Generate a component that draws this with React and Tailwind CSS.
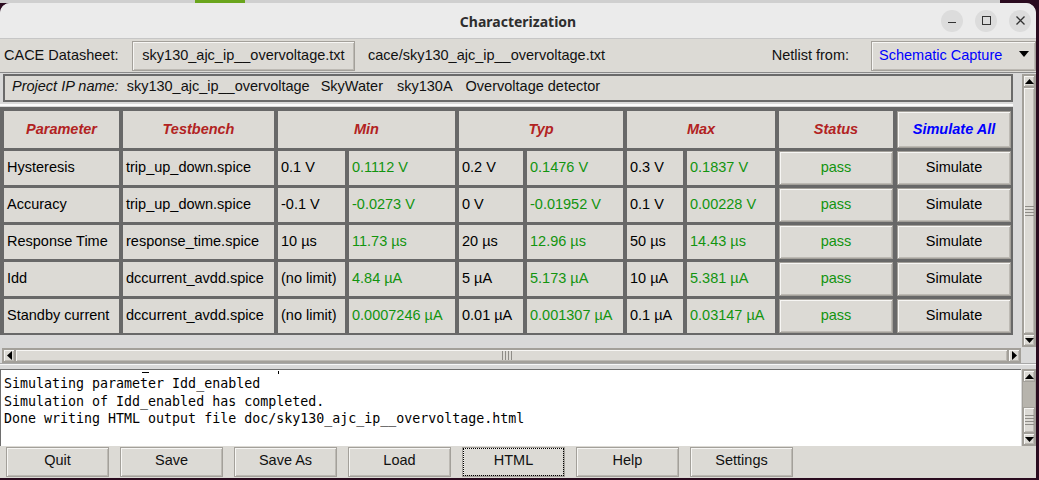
import React from "react";

const rows = [
    ["Hysteresis", "trip_up_down.spice", "0.1 V", "0.1112 V", "0.2 V", "0.1476 V", "0.3 V", "0.1837 V"],
    ["Accuracy", "trip_up_down.spice", "-0.1 V", "-0.0273 V", "0 V", "-0.01952 V", "0.1 V", "0.00228 V"],
    ["Response Time", "response_time.spice", "10 µs", "11.73 µs", "20 µs", "12.96 µs", "50 µs", "14.43 µs"],
    ["Idd", "dccurrent_avdd.spice", "(no limit)", "4.84 µA", "5 µA", "5.173 µA", "10 µA", "5.381 µA"],
    ["Standby current", "dccurrent_avdd.spice", "(no limit)", "0.0007246 µA", "0.01 µA", "0.001307 µA", "0.1 µA", "0.03147 µA"],
];

const raised = "bg-[#dcdad5] border border-[#a3a09a] shadow-[inset_1px_1px_0_#f7f6f4,inset_-1px_-1px_0_#bcb9b3]";

function Tri({ dir = "down", w = 9, h = 5 }) {
    const pts = {
        down: `0,0 ${w},0 ${w / 2},${h}`,
        up: `0,${h} ${w},${h} ${w / 2},0`,
        left: `${w},0 ${w},${h} 0,${h / 2}`,
        right: `0,0 0,${h} ${w},${h / 2}`,
    }[dir];
    return (
        <svg width={w} height={h} viewBox={`0 0 ${w} ${h}`}>
            <polygon points={pts} fill="#000" />
        </svg>
    );
}

function Grip({ vertical = true }) {
    // little ridged lines in the middle of a Tk slider
    return vertical ? (
        <div className="flex flex-col gap-[2px]">
            <div className="w-[9px] h-px bg-[#8e8c87]" />
            <div className="w-[9px] h-px bg-[#8e8c87]" />
            <div className="w-[9px] h-px bg-[#8e8c87]" />
            <div className="w-[9px] h-px bg-[#8e8c87]" />
        </div>
    ) : (
        <div className="flex gap-[2px]">
            <div className="h-[9px] w-px bg-[#8e8c87]" />
            <div className="h-[9px] w-px bg-[#8e8c87]" />
            <div className="h-[9px] w-px bg-[#8e8c87]" />
            <div className="h-[9px] w-px bg-[#8e8c87]" />
        </div>
    );
}

function Cell({ children, green }) {
    return (
        <div className={"bg-[#dcdad5] flex items-center pl-[3px] whitespace-nowrap " + (green ? "text-[#12940f]" : "text-black")}>
            {children}
        </div>
    );
}

export default function App() {
    return (
        <div className="w-[1039px] h-[480px] bg-[#2a0b1f] overflow-hidden font-['Liberation_Sans',Arial,sans-serif] text-[14.5px] text-[#111]">
            {/* window behind, peeking over the top */}
            <div className="h-[3px] flex">
                <div className="w-[195px] bg-[#cfcfcf]" />
                <div className="w-[50px] bg-[#6aa51c]" />
                <div className="w-[755px] bg-[#cfcfcf]" />
                <div className="flex-1 bg-[#2a0b1f]" />
            </div>

            <div className="w-[1036px] h-[475px] flex flex-col bg-[#d9d9d9] rounded-t-[10px] overflow-hidden">
                {/* title bar */}
                <div className="h-[36px] shrink-0 bg-[#ebebeb] border-b border-[#c6c6c6] grid grid-cols-[1fr_auto_1fr] items-center">
                    <div />
                    <div className="font-['Noto_Sans',sans-serif] font-bold text-[14px] text-[#2e2e2e] pt-[1px]">Characterization</div>
                    <div className="flex justify-end gap-[12px] pr-[5px]">
                        <div className="w-[22px] h-[22px] rounded-full bg-[#dcdcdc] flex items-center justify-center">
                            <div className="w-[8px] h-[1.5px] bg-[#333] mt-[4px]" />
                        </div>
                        <div className="w-[22px] h-[22px] rounded-full bg-[#dcdcdc] flex items-center justify-center">
                            <div className="w-[9px] h-[9px] border border-[#333]" />
                        </div>
                        <div className="w-[22px] h-[22px] rounded-full bg-[#dcdcdc] flex items-center justify-center">
                            <svg width="9" height="9" viewBox="0 0 9 9">
                                <path d="M0.5 0.5L8.5 8.5M8.5 0.5L0.5 8.5" stroke="#333" strokeWidth="1.3" />
                            </svg>
                        </div>
                    </div>
                </div>

                {/* datasheet bar */}
                <div className="h-[33px] shrink-0 flex items-center pl-[4px] bg-[#dcdad5]">
                    <span className="w-[128px]">CACE Datasheet:</span>
                    <div className={"w-[223px] h-[30px] flex items-center justify-center " + raised}>sky130_ajc_ip__overvoltage.txt</div>
                    <span className="ml-[13px]">cace/sky130_ajc_ip__overvoltage.txt</span>
                    <span className="ml-auto mr-[22px]">Netlist from:</span>
                    <div className={"w-[165px] h-[30px] flex items-center pl-[7px] pr-[6px] text-[#0000ff] " + raised}>
                        <span>Schematic Capture</span>
                        <span className="ml-auto mb-[3px]"><Tri dir="down" w={10} h={6} /></span>
                    </div>
                </div>
                <div className="h-px shrink-0 bg-[#8a8a8a]" />

                {/* table area */}
                <div className="h-[275px] shrink-0 flex">
                    <div className="w-[1021px] flex flex-col">
                        <div className="ml-[3px] mt-px w-[1010px] h-[28px] border-2 border-[#6a6a6a] bg-[#dcdad5] flex items-start pl-[7px] whitespace-nowrap">
                            <span className="italic">Project IP name:</span>
                            <span className="ml-[8px]">sky130_ajc_ip__overvoltage</span>
                            <span className="ml-[11px]">SkyWater</span>
                            <span className="ml-[14px]">sky130A</span>
                            <span className="ml-[13px]">Overvoltage detector</span>
                        </div>
                        <div className="h-[5px] flex flex-col justify-center">
                            <div className="h-[2px] bg-[#fbfbfb] w-[1013px]" />
                        </div>

                        <div className="w-[1013px] bg-[#686868] pt-[4px] pl-[4px] pr-[2px] pb-[2px] grid grid-cols-[115px_151px_67px_106px_64px_96px_56px_88px_114px_114px] grid-rows-[37px_34px_34px_34px_34px_34px] gap-x-[4px] gap-y-[3px]">
                            <div className="bg-[#dcdad5] flex items-center justify-center font-bold italic text-[#b22222]">Parameter</div>
                            <div className="bg-[#dcdad5] flex items-center justify-center font-bold italic text-[#b22222]">Testbench</div>
                            <div className="col-span-2 bg-[#dcdad5] flex items-center justify-center font-bold italic text-[#b22222]">Min</div>
                            <div className="col-span-2 bg-[#dcdad5] flex items-center justify-center font-bold italic text-[#b22222]">Typ</div>
                            <div className="col-span-2 bg-[#dcdad5] flex items-center justify-center font-bold italic text-[#b22222]">Max</div>
                            <div className="bg-[#dcdad5] flex items-center justify-center font-bold italic text-[#b22222]">Status</div>
                            <div className={"flex items-center justify-center font-bold italic text-[#0000ff] " + raised}>Simulate All</div>

                            {rows.map((r) => (
                                <React.Fragment key={r[0]}>
                                    {r.map((v, i) => (
                                        <Cell key={i} green={i === 3 || i === 5 || i === 7}>{v}</Cell>
                                    ))}
                                    <div className={"flex items-center justify-center text-[#12940f] " + raised}>pass</div>
                                    <div className={"flex items-center justify-center text-black " + raised}>Simulate</div>
                                </React.Fragment>
                            ))}
                        </div>
                    </div>

                    {/* vertical scrollbar of the table */}
                    <div className="w-[14px] ml-px mt-px mb-px flex flex-col border border-[#a3a09a] bg-[#cfcdc8]">
                        <div className={"h-[12px] flex items-center justify-center " + raised}><Tri dir="up" /></div>
                        <div className={"flex-1 flex items-center justify-center " + raised}><Grip /></div>
                        <div className={"h-[12px] flex items-center justify-center " + raised}><Tri dir="down" /></div>
                    </div>
                </div>

                {/* horizontal scrollbar */}
                <div className="h-[15px] shrink-0 flex">
                    <div className="w-[1019px] ml-[2px] flex border border-[#a3a09a] bg-[#cfcdc8]">
                        <div className={"w-[12px] flex items-center justify-center " + raised}><Tri dir="left" w={5} h={9} /></div>
                        <div className={"flex-1 flex items-center justify-center pr-[10px] " + raised}><Grip vertical={false} /></div>
                        <div className={"w-[12px] flex items-center justify-center " + raised}><Tri dir="right" w={5} h={9} /></div>
                    </div>
                </div>

                <div className="h-[6px] shrink-0 flex flex-col">
                    <div className="h-px bg-[#a8a8a8]" />
                    <div className="h-px bg-[#f7f7f7]" />
                </div>

                {/* console */}
                <div className="h-[77px] shrink-0 flex">
                    <div className="relative w-[1021px] bg-white border-t border-l border-[#6e6e6e] pt-[5px] pl-[3px] font-['DejaVu_Sans_Mono',monospace] text-[13.3px] leading-[17.5px] text-black whitespace-pre overflow-hidden">
                        <div className="absolute left-[141px] top-[2px] w-[7px] h-px bg-black" />
                        <div className="absolute left-[277px] top-[1px] w-px h-[3px] bg-black" />
                        <div>Simulating parameter Idd_enabled</div>
                        <div>Simulation of Idd_enabled has completed.</div>
                        <div>Done writing HTML output file doc/sky130_ajc_ip__overvoltage.html</div>
                    </div>
                    <div className="w-[14px] ml-px flex flex-col border border-[#a3a09a] bg-[#b7b4ad]">
                        <div className={"h-[12px] flex items-center justify-center " + raised}><Tri dir="up" /></div>
                        <div className="h-[25px]" />
                        <div className={"flex-1 flex items-center justify-center " + raised}><Grip /></div>
                        <div className={"h-[12px] flex items-center justify-center " + raised}><Tri dir="down" /></div>
                    </div>
                </div>

                {/* bottom buttons */}
                <div className="h-[32px] shrink-0 flex items-start pt-px pl-[6px] gap-[11px] bg-[#dcdad5]">
                    {["Quit", "Save", "Save As", "Load", "HTML", "Help", "Settings"].map((b) => (
                        <div key={b} className={"w-[103px] h-[30px] flex items-center justify-center " + raised}>
                            {b === "HTML" ? (
                                <div className="w-full h-full outline-1 outline-dotted outline-black -outline-offset-1 flex items-center justify-center pb-[2px]">{b}</div>
                            ) : <span className="pb-[2px]">{b}</span>}
                        </div>
                    ))}
                </div>
            </div>
        </div>
    );
}
